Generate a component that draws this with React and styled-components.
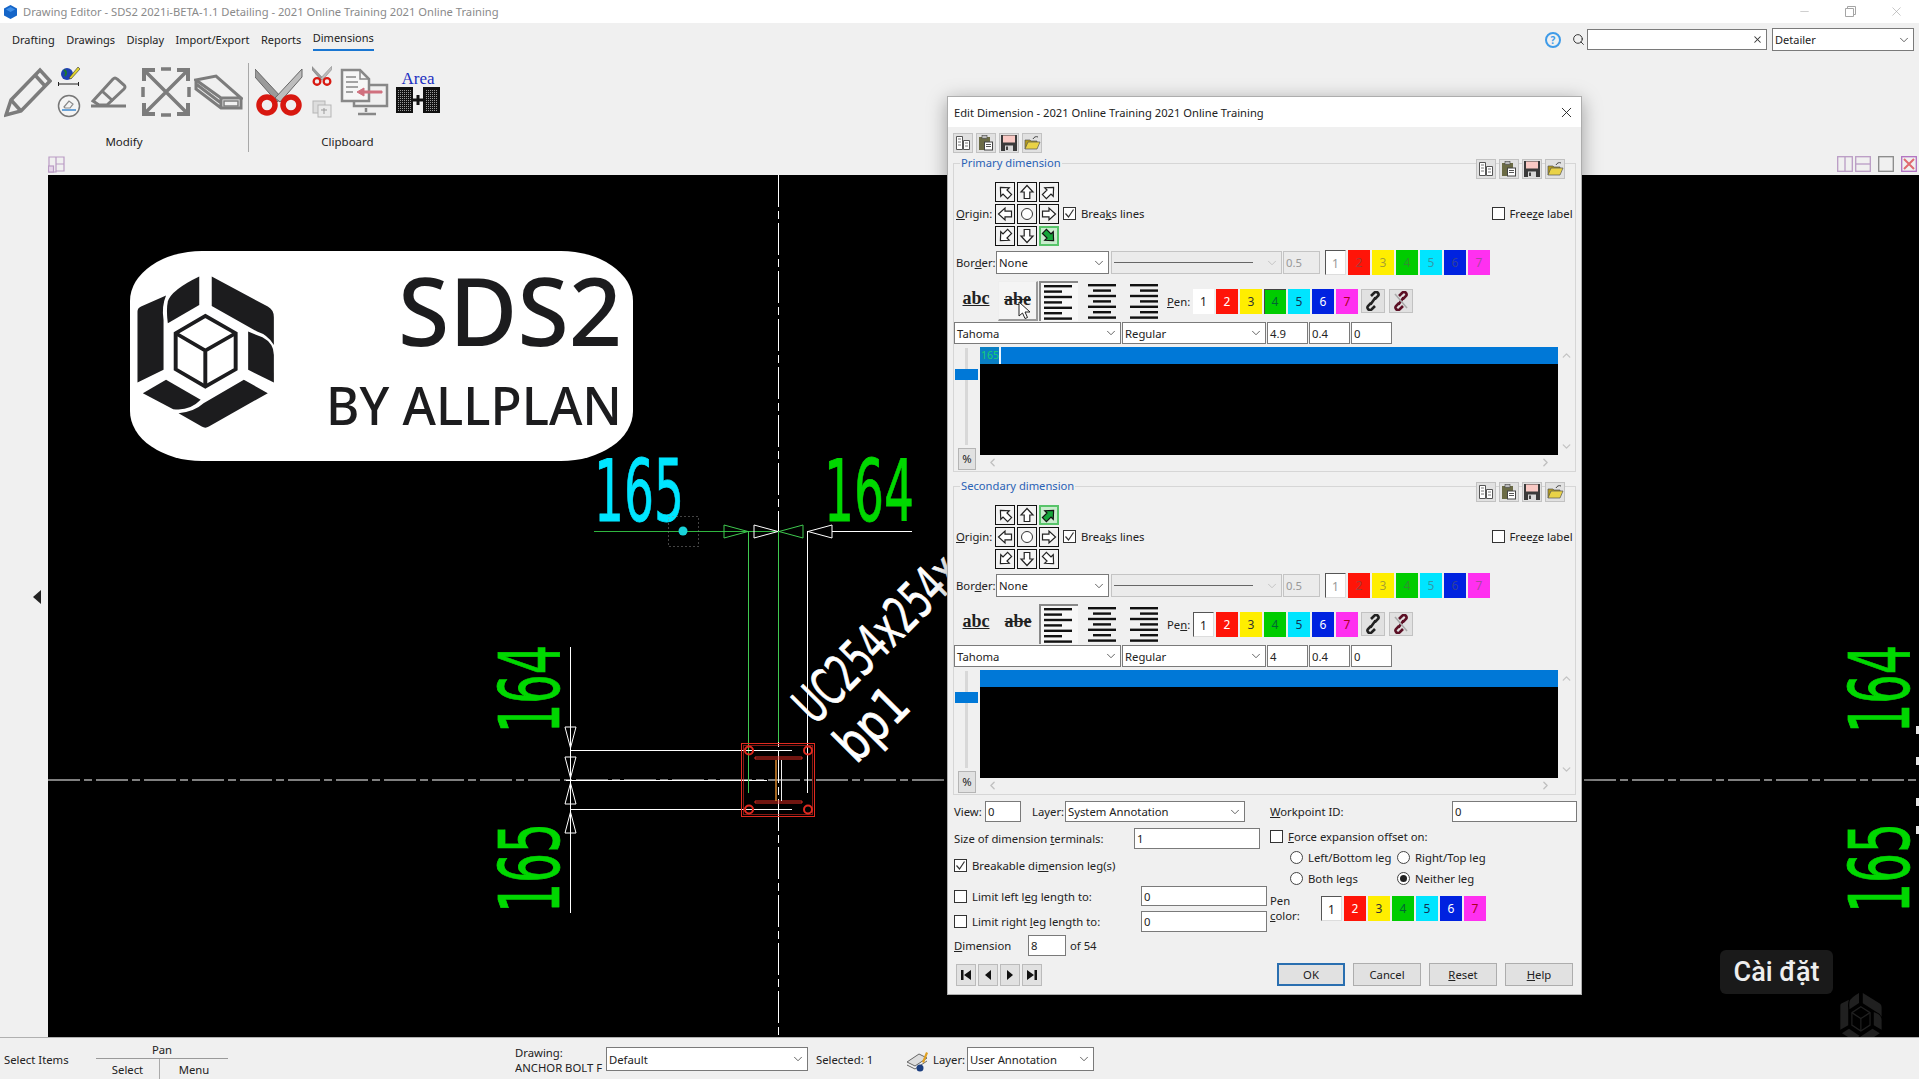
import React from 'react'
import styled, { createGlobalStyle } from 'styled-components'
import { ChevronDown, ChevronUp, ChevronLeft, ChevronRight, X, Minus, Search } from 'lucide-react'

const UI_FONT = '"Noto Sans", "Liberation Sans", sans-serif'
const CAD_FONT = '"DejaVu Sans", "Liberation Sans", sans-serif'

const GREEN = '#00d800'
const CYAN = '#00e5ff'
const WHITE = '#ffffff'
const RED = '#e02a20'
const PEN_COLORS = ['#ffffff', '#ff1408', '#ffee00', '#00cc00', '#00e5ff', '#0022e0', '#ff30f0']
const PEN_TEXT = ['#222', '#fff', '#333', '#063', '#135', '#fff', '#a02']

const GlobalStyle = createGlobalStyle`
  * { box-sizing: border-box; }
  html, body { margin: 0; height: 100%; overflow: hidden; background: #f0f0f0; }
  body { font-family: ${UI_FONT}; font-size: 11.3px; color: #222; }
  u { text-underline-offset: 1px; }
`

const Page = styled.div`
  position: relative;
  width: 1919px;
  height: 1079px;
  display: flex;
  flex-direction: column;
  overflow: hidden;
  background: #f0f0f0;
`

/* window title */
const TitleBar = styled.div`
  height: 23px;
  flex: none;
  display: flex;
  align-items: center;
  padding-left: 4px;
  background: #fff;
  color: #8a8a8a;
  font-size: 11.2px;
`
const TitleText = styled.span`
  margin-left: 6px;
  white-space: nowrap;
`
const WinControls = styled.div`
  margin-left: auto;
  display: flex;
  color: #a5a5a5;
`
const WinControl = styled.div`
  width: 46px;
  height: 23px;
  display: flex;
  align-items: center;
  justify-content: center;
`

/* ribbon */
const Ribbon = styled.div`
  height: 152px;
  flex: none;
  display: flex;
  flex-direction: column;
`
const MenuBar = styled.div`
  height: 30px;
  display: flex;
  align-items: center;
  padding: 3px 5px 0 12px;
  gap: 11.500px;
  font-size: 11px;
`
const MenuItem = styled.div`
  line-height: 20px;
  white-space: nowrap;
  border-bottom: ${p => (p.$active ? '2px solid #1976d2' : 'none')};
  height: ${p => (p.$active ? '23px' : '20px')};
`
const MenuRight = styled.div`
  margin-left: auto;
  display: flex;
  align-items: center;
`
const HelpBadge = styled.div`
  width: 16px;
  height: 16px;
  border-radius: 50%;
  border: 2px solid #3f9be8;
  color: #3f9be8;
  font-size: 10px;
  font-weight: 700;
  line-height: 12px;
  text-align: center;
  margin-right: 11px;
`
const SearchBox = styled.div`
  width: 180px;
  height: 21px;
  margin-left: 2px;
  margin-right: 5px;
  background: #fff;
  border: 1px solid #7a7a7a;
  display: flex;
  align-items: center;
  justify-content: flex-end;
  padding-right: 3px;
  color: #333;
`
const RibbonBody = styled.div`
  height: 100px;
  display: flex;
`
const ToolGroup = styled.div`
  width: ${p => p.$width}px;
  display: flex;
  flex-direction: column;
  padding-top: 13px;
`
const ToolRow = styled.div`
  height: 52px;
  display: flex;
  align-items: center;
  padding-left: ${p => p.$left || 0}px;
`
const ToolStack = styled.div`
  width: 22px;
  height: 52px;
  margin: ${p => p.$margin || '0'};
  display: flex;
  flex-direction: column;
  justify-content: space-between;
  align-items: center;
`
const ToolGap = styled.div`
  width: ${p => p.$width}px;
  flex: none;
`
const GroupLabel = styled.div`
  margin-top: 16px;
  text-align: center;
  font-size: 11.5px;
  line-height: 16px;
`
const RibbonDivider = styled.div`
  width: 1px;
  height: 89px;
  margin: 10px 6px 0 0;
  background: #a8a8a8;
`
const RibbonFooter = styled.div`
  height: 22px;
  display: flex;
  justify-content: space-between;
  align-items: center;
  padding: 0 2px 0 48px;
`
const ViewIcons = styled.div`
  display: flex;
  gap: 2px;
`

/* main */
const Main = styled.div`
  flex: none;
  height: 862px;
  display: flex;
`
const LeftStrip = styled.div`
  width: 48px;
  flex: none;
  display: flex;
  align-items: center;
  justify-content: flex-end;
  padding: 0 7px 18px 0;
  background: #f0f0f0;
`
const CollapseArrow = styled.div`
  width: 0;
  height: 0;
  border-style: solid;
  border-width: 7px 8px 7px 0;
  border-color: transparent #222 transparent transparent;
`
const Canvas = styled.div`
  position: relative;
  flex: 1;
  background: #000;
  overflow: hidden;
`
const Drawing = styled.svg`
  position: absolute;
  inset: 0;
  width: 100%;
  height: 100%;
`
const CadText = styled.text`
  font-family: ${CAD_FONT};
  stroke-width: 0.8px;
`
const LogoText = styled.text`
  font-family: "Noto Sans", sans-serif;
  font-weight: 500;
  fill: #1c1c1e;
`
const Toast = styled.div`
  position: absolute;
  left: 1672px;
  top: 775px;
  width: 113px;
  height: 44px;
  background: #1a1a1a;
  border-radius: 6px;
  color: #eee;
  font-family: Roboto, sans-serif;
  font-weight: 500;
  font-size: 27px;
  line-height: 44px;
  text-align: center;
`

/* status bar */
const StatusBar = styled.div`
  flex: none;
  height: 42px;
  display: flex;
  border-top: 1px solid #b0b0b0;
  font-size: 11.3px;
  white-space: nowrap;
`
const StatusItem = styled.div`
  width: ${p => p.$width}px;
  flex: none;
  height: 100%;
  display: flex;
  align-items: center;
  padding-top: 2px;
  padding-left: ${p => p.$left || 0}px;
`
const PanBlock = styled.div`
  width: 132px;
  flex: none;
  display: flex;
  flex-direction: column;
  margin-right: 287px;
`
const PanLabel = styled.div`
  height: 21px;
  line-height: 24px;
  text-align: center;
  border-bottom: 1px solid #9a9a9a;
`
const PanRow = styled.div`
  display: flex;
  height: 20px;
  align-items: center;
`
const PanCell = styled.div`
  width: ${p => p.$width}px;
  height: 100%;
  line-height: 22px;
  text-align: center;
  border-right: ${p => (p.$line ? '1px solid #aaa' : 'none')};
`
const DrawingCell = styled.div`
  width: 91px;
  flex: none;
  padding-top: 7px;
  line-height: 15px;
  overflow: hidden;
`
const StatusField = styled.div`
  margin-top: 9px;
`

/* dialog */
const Dialog = styled.div`
  position: absolute;
  left: 947px;
  top: 96px;
  width: 635px;
  height: 899px;
  background: #f0f0f0;
  border: 1px solid #adadad;
  box-shadow: 0 4px 18px rgba(0, 0, 0, 0.35);
  padding: 0 5px;
`
const DialogTitle = styled.div`
  height: 30px;
  margin: 0 -5px;
  padding: 0 6px 0 6px;
  background: #fff;
  display: flex;
  align-items: center;
  justify-content: space-between;
  font-size: 11.2px;
`
const SaveBar = styled.div`
  display: flex;
  gap: 3px;
  height: 20px;
  margin-top: ${p => p.$top || 0}px;
`
const IconButton = styled.div`
  width: 20px;
  height: 20px;
  background: #e1e1e1;
  border: 1px solid #c2c2c2;
  display: flex;
  align-items: center;
  justify-content: center;
`
const Group = styled.div`
  position: relative;
  height: 309px;
  margin-top: ${p => p.$top}px;
  border: 1px solid #d6d6d6;
  padding-top: 18px;
`
const Legend = styled.div`
  position: absolute;
  left: 6px;
  top: -9px;
  padding: 0 1px;
  background: #f0f0f0;
  color: #2a62b5;
  font-size: 11.2px;
  line-height: 16px;
`
const GroupTools = styled.div`
  position: absolute;
  right: 10px;
  top: -5px;
`
const OriginRow = styled.div`
  height: 64px;
  padding-bottom: 2px;
  display: flex;
  align-items: center;
`
const RowLabel = styled.div`
  width: ${p => p.$width}px;
  margin-left: ${p => p.$left || 0}px;
  flex: none;
  white-space: nowrap;
`
const OriginGrid = styled.div`
  display: grid;
  grid-template-columns: repeat(3, 20px);
  grid-auto-rows: 20px;
  gap: 2px;
  margin-bottom: -2px;
`
const OriginCell = styled.div`
  border: 1px solid ${p => (p.$on ? '#58c46a' : '#111')};
  background: ${p => (p.$on ? '#c9eccd' : '#f2f2f2')};
  box-shadow: ${p => (p.$on ? 'inset 0 0 0 1px #58c46a' : 'none')};
  display: flex;
  align-items: center;
  justify-content: center;
`
const CheckLabel = styled.label`
  display: flex;
  align-items: center;
  gap: 5px;
  white-space: nowrap;
  margin-left: ${p => p.$left || 0}px;
  height: ${p => p.$height || 14}px;
`
const Box = styled.span`
  width: 13px;
  height: 13px;
  flex: none;
  background: #fff;
  border: 1px solid #333;
  display: flex;
  align-items: center;
  justify-content: center;
`
const Radio = styled.span`
  width: 13px;
  height: 13px;
  flex: none;
  border-radius: 50%;
  background: #fff;
  border: 1px solid #444;
  display: flex;
  align-items: center;
  justify-content: center;
  &::after {
    content: '';
    width: 7px;
    height: 7px;
    border-radius: 50%;
    background: ${p => (p.$on ? '#222' : 'transparent')};
  }
`
const FormRow = styled.div`
  display: flex;
  align-items: center;
  height: ${p => p.$height || 23}px;
  margin-top: ${p => p.$top || 0}px;
  margin-left: ${p => p.$left || 0}px;
`
const Field = styled.div`
  width: ${p => p.$width}px;
  height: ${p => p.$height || 21}px;
  flex: none;
  margin-left: ${p => p.$left || 0}px;
  padding: 0 2px 0 2px;
  background: ${p => (p.$off ? '#ebebeb' : '#fff')};
  border: 1px solid ${p => (p.$off ? '#c4c4c4' : '#7a7a7a')};
  color: ${p => (p.$off ? '#999' : '#222')};
  display: flex;
  align-items: center;
  justify-content: space-between;
  white-space: nowrap;
  overflow: hidden;
`
const LineSample = styled.div`
  flex: 1;
  height: 1px;
  margin-right: 12px;
  background: #666;
`
const Swatches = styled.div`
  display: flex;
  gap: 2px;
  margin-left: ${p => p.$left || 0}px;
  margin-top: ${p => p.$top || 0}px;
`
const Swatch = styled.div`
  width: ${p => (p.$first ? 21 : 22)}px;
  height: 25px;
  background: ${p => p.$bg};
  color: ${p => p.$fg};
  text-align: center;
  line-height: 25px;
  font-size: 12px;
  border-top: ${p => (p.$frame ? '1px solid #555' : 'none')};
  border-left: ${p => (p.$frame ? '1px solid #555' : 'none')};
  border-bottom: ${p => (p.$frame ? '1px solid #ddd' : 'none')};
  border-right: ${p => (p.$frame ? '1px solid #ddd' : 'none')};
  box-shadow: ${p => (p.$pressed ? 'inset 1px 1px 0 #444' : 'none')};
`
const TextRow = styled.div`
  height: 42px;
  margin-top: 6px;
  display: flex;
  align-items: center;
`
const AbcGlyph = styled.div`
  position: relative;
  width: ${p => p.$width || 40}px;
  height: 40px;
  margin-left: ${p => p.$left || 0}px;
  flex: none;
  font-family: "Liberation Serif", serif;
  font-weight: 700;
  font-size: 18px;
  line-height: 34px;
  text-align: center;
  color: #222;
  text-decoration: ${p => p.$line};
  background: ${p => (p.$raised ? '#f4f4f4' : 'transparent')};
  border-right: ${p => (p.$raised ? '2px solid #999' : 'none')};
  border-bottom: ${p => (p.$raised ? '2px solid #999' : 'none')};
  border-top: ${p => (p.$raised ? '1px solid #eee' : 'none')};
  border-left: ${p => (p.$raised ? '1px solid #eee' : 'none')};
`
const PointerMark = styled.svg`
  position: absolute;
  left: 19px;
  top: 19px;
`
const AlignButton = styled.div`
  width: ${p => p.$width}px;
  height: 40px;
  flex: none;
  margin-left: ${p => p.$left || 0}px;
  padding-right: ${p => (p.$on ? 3 : 0)}px;
  display: flex;
  align-items: center;
  justify-content: center;
  background: ${p => (p.$on ? '#f7f7f7' : 'transparent')};
  border-top: ${p => (p.$on ? '2px solid #888' : 'none')};
  border-left: ${p => (p.$on ? '2px solid #888' : 'none')};
`
const LinkButton = styled.div`
  width: 24px;
  height: 24px;
  margin-left: ${p => p.$left}px;
  flex: none;
  background: #e1e1e1;
  border: 1px solid #c2c2c2;
  display: flex;
  align-items: center;
  justify-content: center;
`
const PreviewRow = styled.div`
  display: flex;
  margin-top: 3px;
  height: 123px;
`
const SliderCol = styled.div`
  position: relative;
  width: 26px;
  flex: none;
`
const SliderTrack = styled.div`
  position: absolute;
  left: 11px;
  top: 1px;
  width: 3px;
  height: 97px;
  background: #d8d8d8;
`
const SliderThumb = styled.div`
  position: absolute;
  left: 1px;
  top: 22px;
  width: 23px;
  height: 11px;
  background: #0078d7;
`
const PercentButton = styled.div`
  position: absolute;
  left: 4px;
  bottom: 0;
  width: 18px;
  height: 22px;
  background: #e1e1e1;
  border: 1px solid #b5b5b5;
  text-align: center;
  line-height: 20px;
`
const PreviewPane = styled.div`
  width: 578px;
  flex: none;
  display: flex;
  flex-direction: column;
`
const PreviewBlack = styled.div`
  height: 108px;
  background: #000;
`
const PreviewLine = styled.div`
  height: 17px;
  background: #0078d7;
  display: flex;
`
const PreviewValue = styled.span`
  width: 21px;
  background: #0a7fc4;
  border-right: 2px solid #e8f4ff;
  color: #18d070;
  font-size: 10.5px;
  line-height: 17px;
  padding-left: 1px;
`
const HScroll = styled.div`
  height: 15px;
  display: flex;
  justify-content: space-between;
  align-items: center;
  padding: 0 6px 0 6px;
  color: #c0c0c0;
`
const VScroll = styled.div`
  width: 18px;
  height: 108px;
  display: flex;
  flex-direction: column;
  justify-content: space-between;
  align-items: center;
  padding: 2px 0;
  color: #c4c4c4;
`

const BottomGrid = styled.div`
  display: grid;
  grid-template-columns: 316px 1fr;
  margin-top: 6px;
  padding-left: 1px;
`
const BottomCol = styled.div`
  display: flex;
  flex-direction: column;
`
const RadioGrid = styled.div`
  display: grid;
  grid-template-columns: 107px 1fr;
  grid-auto-rows: 14px;
  row-gap: 7px;
  margin: 7px 0 0 20px;
`
const PenBlock = styled.div`
  display: flex;
  margin-top: 8px;
  align-items: center;
`
const PenCaption = styled.div`
  width: 51px;
  line-height: 15px;
`
const ButtonRow = styled.div`
  display: flex;
  align-items: center;
  margin-top: 7px;
  padding-left: 3px;
`
const NavGroup = styled.div`
  display: flex;
  gap: 2px;
  margin-right: 235px;
`
const NavButton = styled.div`
  width: 20px;
  height: 22px;
  background: #e1e1e1;
  border: 1px solid #bbb;
  display: flex;
  align-items: center;
  justify-content: center;
`
const ActionGroup = styled.div`
  display: flex;
  gap: 8px;
`
const ActionButton = styled.div`
  width: 68px;
  height: 23px;
  background: #e1e1e1;
  border: ${p => (p.$primary ? '2px solid #2a6fb0' : '1px solid #adadad')};
  text-align: center;
  line-height: ${p => (p.$primary ? 19 : 21)}px;
`

function CopyIcon() {
  return (
    <svg width="16" height="16" viewBox="0 0 16 16" fill="#fff" stroke="#555">
      <path d="M1.5 1.5h6v13h-6zM8.5 5.5h6v9h-6z" />
      <path d="M3 4h3M3 7h3M3 10h3M10 8h3M10 11h3" strokeWidth="0.8" />
    </svg>
  )
}
function PasteIcon() {
  return (
    <svg width="16" height="16" viewBox="0 0 16 16">
      <rect x="1" y="2" width="11" height="13" fill="#6b6b45" />
      <rect x="4" y="0.5" width="5" height="3" fill="#bcbcbc" stroke="#444" strokeWidth="0.6" />
      <rect x="6.5" y="7" width="8" height="8" fill="#fff" stroke="#444" />
      <path d="M8 9.5h5M8 11.5h5" stroke="#555" />
    </svg>
  )
}
function SaveIcon() {
  return (
    <svg width="18" height="18" viewBox="0 0 18 18">
      <rect x="1" y="1" width="16" height="16" fill="#3a3a3a" />
      <rect x="3" y="1.5" width="12" height="7" fill="#f9c9c4" />
      <rect x="5" y="11.5" width="8" height="5.5" fill="#d8d8d8" />
      <rect x="6" y="12.5" width="2" height="3.5" fill="#444" />
    </svg>
  )
}
function OpenIcon() {
  return (
    <svg width="17" height="16" viewBox="0 0 17 16">
      <path d="M1 14V5h5l1 1h6v2" fill="#b49b1a" stroke="#555" strokeWidth="0.7" />
      <path d="M1 14l3-7h12l-3 7z" fill="#e9d247" stroke="#555" strokeWidth="0.7" />
      <path d="M9 4c1-2 3-3 5-2" fill="none" stroke="#444" />
    </svg>
  )
}
function SaveTools() {
  return (
    <>
      <IconButton><CopyIcon /></IconButton>
      <IconButton><PasteIcon /></IconButton>
      <IconButton><SaveIcon /></IconButton>
      <IconButton><OpenIcon /></IconButton>
    </>
  )
}

function DirArrow({ angle, on }) {
  return (
    <svg width="16" height="16" viewBox="0 0 16 16" style={{ transform: `rotate(${angle}deg)` }}>
      <path
        d="M8 1.5 14 8h-3.2v6.5H5.200V8H2z"
        fill={on ? '#16a63a' : '#fff'}
        stroke={on ? '#111' : '#222'}
        strokeWidth="1.2"
      />
    </svg>
  )
}
function OriginPad({ selected }) {
  const angles = [-45, 0, 45, -90, null, 90, -135, 180, 135]
  return (
    <OriginGrid>
      {angles.map((a, i) => (
        <OriginCell key={i} $on={i === selected}>
          {a === null ? (
            <svg width="14" height="14" viewBox="0 0 14 14">
              <circle cx="7" cy="7" r="5.500" fill="#fff" stroke="#333" />
            </svg>
          ) : (
            <DirArrow angle={a} on={i === selected} />
          )}
        </OriginCell>
      ))}
    </OriginGrid>
  )
}

function Check({ on, children, left }) {
  return (
    <CheckLabel $left={left}>
      <Box>
        {on && (
          <svg width="11" height="11" viewBox="0 0 11 11">
            <path d="M1.500 5.500 4.500 9 9.500 1.500" fill="none" stroke="#333" strokeWidth="1.2" />
          </svg>
        )}
      </Box>
      <span>{children}</span>
    </CheckLabel>
  )
}
function RadioItem({ on, children }) {
  return (
    <CheckLabel>
      <Radio $on={on} />
      <span>{children}</span>
    </CheckLabel>
  )
}
function Select({ width, height, left, off, children }) {
  return (
    <Field $width={width} $height={height} $left={left} $off={off}>
      {children}
      <ChevronDown size={14} strokeWidth={1.4} color={off ? '#bbb' : '#444'} style={{ flex: 'none' }} />
    </Field>
  )
}
function PenSwatches({ dim, frameFirst, pressed, left, top }) {
  return (
    <Swatches $left={left} $top={top}>
      {PEN_COLORS.map((c, i) => (
        <Swatch
          key={c}
          $first={i === 0}
          $bg={c}
          $fg={dim ? (i === 0 ? '#999' : 'rgba(90,90,90,0.55)') : PEN_TEXT[i]}
          $frame={i === 0 && frameFirst}
          $pressed={i + 1 === pressed}
        >
          {i + 1}
        </Swatch>
      ))}
    </Swatches>
  )
}
function AlignLines({ mode }) {
  const rows = [28, 18, 28, 18, 28, 18, 28]
  return (
    <svg width="28" height="36" viewBox="0 0 28 36">
      {rows.map((w, i) => {
        const x = mode === 'left' ? 0 : mode === 'center' ? (28 - w) / 2 : 28 - w
        return <rect key={i} x={x} y={1 + i * 5.400} width={w} height="2.400" fill="#111" />
      })}
    </svg>
  )
}
function ChainIcon({ broken }) {
  return (
    <svg width="18" height="20" viewBox="0 0 18 20" fill="none">
      <path
        d="M7 12 4 15a2.500 2.500 0 0 0 3.500 3.500L11 15M11 8l3-3a2.500 2.500 0 0 0-3.500-3.500L7 5M6.500 13.500l5-7"
        stroke={broken ? '#5c1025' : '#222'}
        strokeWidth="2.600"
      />
      {broken && <path d="M3 3 15 17" stroke="#aaa" strokeWidth="1.600" />}
    </svg>
  )
}

function DimensionGroup({ top, title, selected, height, value, penPressed, pointer, penFramed }) {
  return (
    <Group $top={top}>
      <Legend>{title}</Legend>
      <GroupTools><SaveBar><SaveTools /></SaveBar></GroupTools>
      <OriginRow>
        <RowLabel $left={2} $width={39}><u>O</u>rigin:</RowLabel>
        <OriginPad selected={selected} />
        <Check on left={4}>Brea<u>k</u>s lines</Check>
        <Check left={347}>Free<u>z</u>e label</Check>
      </OriginRow>
      <FormRow $top={5}>
        <RowLabel $left={2} $width={40}>Bor<u>d</u>er:</RowLabel>
        <Select width={113} height={23}>None</Select>
        <Select width={171} height={23} left={2} off><LineSample /></Select>
        <Field $width={37} $height={23} $left={1} $off>0.5</Field>
        <PenSwatches dim frameFirst left={5} top={-1} />
      </FormRow>
      <TextRow>
        <AbcGlyph $width={44} $line="underline">abc</AbcGlyph>
        <AbcGlyph $width={40} $raised={pointer} $line="line-through">
          abe
          {pointer && (
            <PointerMark width="13" height="18" viewBox="0 0 13 18">
              <path d="M1 1v14l3.500-3 2.500 5.500 2.500-1-2.500-5.500H12z" fill="#fff" stroke="#222" />
            </PointerMark>
          )}
        </AbcGlyph>
        <AlignButton $width={39} $left={1} $on><AlignLines mode="left" /></AlignButton>
        <AlignButton $width={28} $left={10}><AlignLines mode="center" /></AlignButton>
        <AlignButton $width={28} $left={14}><AlignLines mode="right" /></AlignButton>
        <RowLabel $left={9} $width={26}>
          {pointer ? <><u>P</u>en:</> : <>Pe<u>n</u>:</>}
        </RowLabel>
        <PenSwatches frameFirst={penFramed} pressed={penPressed} />
        <LinkButton $left={3}><ChainIcon /></LinkButton>
        <LinkButton $left={4}><ChainIcon broken /></LinkButton>
      </TextRow>
      <FormRow $height={22}>
        <Select width={167} height={22}>Tahoma</Select>
        <Select width={144} height={22} left={1}>Regular</Select>
        <Field $width={41} $height={22} $left={1}>{height}</Field>
        <Field $width={41} $height={22} $left={1}>0.4</Field>
        <Field $width={41} $height={22} $left={1}>0</Field>
      </FormRow>
      <PreviewRow>
        <SliderCol>
          <SliderTrack />
          <SliderThumb />
          <PercentButton>%</PercentButton>
        </SliderCol>
        <PreviewPane>
          <PreviewBlack>
            <PreviewLine>{value && <PreviewValue>{value}</PreviewValue>}</PreviewLine>
          </PreviewBlack>
          <HScroll>
            <ChevronLeft size={13} strokeWidth={2.500} />
            <ChevronRight size={13} strokeWidth={2.500} />
          </HScroll>
        </PreviewPane>
        <VScroll>
          <ChevronUp size={13} strokeWidth={2.500} />
          <ChevronDown size={13} strokeWidth={2.500} />
        </VScroll>
      </PreviewRow>
    </Group>
  )
}

function BottomForm() {
  return (
    <BottomGrid>
      <BottomCol>
        <FormRow $height={21}>
          <RowLabel $width={31}>View:</RowLabel>
          <Field $width={36}>0</Field>
          <RowLabel $left={11} $width={33}>Layer:</RowLabel>
          <Select width={180}>System Annotation</Select>
        </FormRow>
        <FormRow $height={21} $top={6}>
          <RowLabel $width={180}>Size of dimension <u>t</u>erminals:</RowLabel>
          <Field $width={126}>1</Field>
        </FormRow>
        <FormRow $height={14} $top={9}>
          <Check on>Breakable di<u>m</u>ension leg(s)</Check>
        </FormRow>
        <FormRow $height={20} $top={14}>
          <RowLabel $width={187}><Check>Limit left l<u>e</u>g length to:</Check></RowLabel>
          <Field $width={126} $height={20}>0</Field>
        </FormRow>
        <FormRow $height={21} $top={5}>
          <RowLabel $width={187}><Check>Limit right <u>l</u>eg length to:</Check></RowLabel>
          <Field $width={126}>0</Field>
        </FormRow>
        <FormRow $height={21} $top={3}>
          <RowLabel $width={74}><u>D</u>imension</RowLabel>
          <Field $width={38}>8</Field>
          <RowLabel $left={4} $width={40}>of 54</RowLabel>
        </FormRow>
      </BottomCol>
      <BottomCol>
        <FormRow $height={21}>
          <RowLabel $width={182}><u>W</u>orkpoint ID:</RowLabel>
          <Field $width={125}>0</Field>
        </FormRow>
        <FormRow $height={13} $top={8}>
          <Check><u>F</u>orce expansion offset on:</Check>
        </FormRow>
        <RadioGrid>
          <RadioItem>Left/Bottom leg</RadioItem>
          <RadioItem>Right/Top leg</RadioItem>
          <RadioItem>Both legs</RadioItem>
          <RadioItem on>Neither leg</RadioItem>
        </RadioGrid>
        <PenBlock>
          <PenCaption>Pen<br /><u>c</u>olor:</PenCaption>
          <PenSwatches frameFirst />
        </PenBlock>
      </BottomCol>
    </BottomGrid>
  )
}

function NavIcon({ kind }) {
  const paths = {
    first: 'M2 2h2.500v10H2zM12 2v10L5 7z',
    prev: 'M10 2v10L4 7z',
    next: 'M4 2v10l6-5z',
    last: 'M12 2H9.500v10H12zM2 2v10l7-5z',
  }
  return (
    <svg width="14" height="14" viewBox="0 0 14 14">
      <path d={paths[kind]} fill="#111" />
    </svg>
  )
}

function EditDialog() {
  return (
    <Dialog>
      <DialogTitle>
        <span>Edit Dimension - 2021 Online Training 2021 Online Training</span>
        <X size={17} strokeWidth={1.300} color="#222" />
      </DialogTitle>
      <SaveBar $top={6}><SaveTools /></SaveBar>
      <DimensionGroup
        top={10}
        title="Primary dimension"
        selected={8}
        height="4.9"
        value="165"
        penPressed={4}
        pointer
      />
      <DimensionGroup
        top={14}
        title="Secondary dimension"
        selected={2}
        height="4"
        penFramed
      />
      <BottomForm />
      <ButtonRow>
        <NavGroup>
          {['first', 'prev', 'next', 'last'].map(k => (
            <NavButton key={k}><NavIcon kind={k} /></NavButton>
          ))}
        </NavGroup>
        <ActionGroup>
          <ActionButton $primary>OK</ActionButton>
          <ActionButton>Cancel</ActionButton>
          <ActionButton><u>R</u>eset</ActionButton>
          <ActionButton><u>H</u>elp</ActionButton>
        </ActionGroup>
      </ButtonRow>
    </Dialog>
  )
}

/* ribbon drawings */
function PencilTool() {
  return (
    <svg width="48" height="52" viewBox="0 0 48 52" fill="none" stroke="#7c7c7c" strokeWidth="3.500">
      <path d="M2 49 7 34 36 4 46 15 17 45z" />
      <path d="M7 34 17 45M31 9 41 20" />
    </svg>
  )
}
function EarthTool() {
  return (
    <svg width="22" height="24" viewBox="0 0 22 24">
      <circle cx="9" cy="8" r="6" fill="#1d3fb0" />
      <path d="M6 4c2 1 3 3 1 6" stroke="#1a7a2e" strokeWidth="2" fill="none" />
      <path d="M11 12 20 1l2 2-9 10z" fill="#e3d52b" stroke="#333" strokeWidth="0.6" />
      <path d="M0 18h21M0.500 16v4M20.500 16v4" stroke="#222" strokeWidth="1" />
    </svg>
  )
}
function EraserBadgeTool() {
  return (
    <svg width="24" height="24" viewBox="0 0 24 24" fill="none">
      <circle cx="12" cy="12" r="10.500" stroke="#777" strokeWidth="1.500" fill="#f4f4f4" />
      <path d="M7 13l5-6 4 3-3 4H8z" stroke="#888" strokeWidth="1.200" />
      <path d="M5 16h14" stroke="#6aa3d8" strokeWidth="2" />
    </svg>
  )
}
function EraserTool() {
  return (
    <svg width="36" height="32" viewBox="0 0 36 32" fill="none" stroke="#7c7c7c" strokeWidth="3">
      <path d="M2 25 22 3q2-2 4 0l7 6q2 2 0 4L16 29H8z" />
      <path d="M11 15 22 25" />
      <path d="M0 30h35" />
    </svg>
  )
}
function ExpandTool() {
  return (
    <svg width="50" height="50" viewBox="0 0 50 50" fill="none" stroke="#7c7c7c" strokeWidth="3.500">
      <path d="M3 3 47 47M47 3 3 47" />
      <path d="M3 14V3h11M36 3h11v11M3 36v11h11M36 47h11V36" strokeWidth="4" />
      <path d="M20 2h10M20 48h10M2 20v10M48 20v10" strokeWidth="3.500" />
    </svg>
  )
}
function BoxTool() {
  return (
    <svg width="49" height="37" viewBox="0 0 49 37" fill="none" stroke="#7c7c7c" strokeWidth="3">
      <path d="M2 6 22 2 47 24H27z" />
      <path d="M2 6v9l25 19h20V24M27 24v10M2 10l25 19" />
      <rect x="30" y="27" width="14" height="5" fill="#f0f0f0" strokeWidth="1.500" />
    </svg>
  )
}
function Scissors({ size }) {
  return (
    <svg width={size} height={size} viewBox="0 0 48 48">
      <path d="M0 1 27 30 22 34 0 9z" fill="#9a9a9a" stroke="#666" />
      <path d="M47 1 20 30 25 34 47 9z" fill="#bdbdbd" stroke="#666" />
      <circle cx="12" cy="37" r="8" fill="none" stroke="#d81810" strokeWidth="5.500" />
      <circle cx="36" cy="37" r="8" fill="none" stroke="#d81810" strokeWidth="5.500" />
    </svg>
  )
}
function PagesTool() {
  return (
    <svg width="20" height="18" viewBox="0 0 20 18" fill="#ddd" stroke="#b5b5b5">
      <rect x="1" y="1" width="12" height="12" />
      <rect x="6" y="5" width="13" height="12" fill="#eaeaea" />
      <path d="M12 8v6M9 10h6" stroke="#999" />
    </svg>
  )
}
function MonitorTool() {
  return (
    <svg width="49" height="48" viewBox="0 0 49 48" fill="none" stroke="#888" strokeWidth="2.500">
      <path d="M2 2h18l9 9v22H2z" fill="#f6f6f6" />
      <path d="M20 2v9h9M6 9h10M6 14h12M6 19h12M6 24h7" strokeWidth="1.500" />
      <path d="M29 17h18v21H14v-5" />
      <path d="M26 40v4M18 46h18" />
      <path d="M17 24l7-4v3h18v2H24v3z" fill="#d0707e" stroke="#d0707e" strokeWidth="1" />
    </svg>
  )
}
function AreaTool() {
  return (
    <svg width="44" height="44" viewBox="0 0 44 44">
      <defs>
        <pattern id="dots" width="2" height="2" patternUnits="userSpaceOnUse">
          <rect width="2" height="2" fill="#111" />
          <rect width="1" height="1" fill="#999" />
        </pattern>
      </defs>
      <text x="22" y="14" textAnchor="middle" fontFamily='"Liberation Serif", serif' fontWeight="400" fontSize="17" fill="#1a2ec0">Area</text>
      <rect x="1" y="18" width="15" height="24" fill="url(#dots)" stroke="#111" strokeWidth="2" />
      <rect x="28" y="18" width="15" height="24" fill="url(#dots)" stroke="#111" strokeWidth="2" />
      <path d="M16 30h12M22 25v10" stroke="#111" strokeWidth="3" />
    </svg>
  )
}
function ViewIcon({ kind }) {
  const stroke = kind === 'close' ? '#b06fc0' : '#b99bc4'
  return (
    <svg width="16" height="16" viewBox="0 0 16 16" fill="none" stroke={stroke} strokeWidth="1.300">
      <rect x="0.700" y="0.700" width="14.600" height="14.600" stroke={kind === 'plain' ? '#888' : stroke} />
      {kind === 'vsplit' && <path d="M8 1v14" />}
      {kind === 'hsplit' && <path d="M1 8h14" />}
      {kind === 'close' && <path d="M3 3 13 13M13 3 3 13" stroke="#e06a70" strokeWidth="2" />}
    </svg>
  )
}

/* canvas drawing, in page coordinates */
function LogoMark({ transform, fill, cubeStroke }) {
  return (
    <g transform={transform} fill={fill}>
      <path d="M313 140 470 230Q487 240 487 262V345Q470 315 440 305L313 228Z" />
      <path d="M415 305 455 322Q487 340 487 375V458L415 420Z" />
      <path d="M278 140V225L190 280Q185 240 190 215Q200 180 278 140Z" />
      <path d="M185 197Q172 230 178 270V420L105 458V245Q105 235 115 230Z" />
      <path d="M185 450 282 510Q250 545 205 538L120 490Z" />
      <path d="M403 450 470 490 305 590Q295 597 285 590L220 550Q265 545 290 520Z" />
      <g fill="none" stroke={cubeStroke} strokeWidth="11">
        <path d="M295 258 380 310V418L295 470 212 418V310Z" />
        <path d="M212 310 295 362 380 310M295 362V470" />
      </g>
    </g>
  )
}
function Arrowhead({ points, color }) {
  return <polygon points={points} fill="none" stroke={color} strokeWidth="1" />
}
function DimText({ x, y, size, length, fill, rotate, children }) {
  const transform = rotate ? `translate(${x} ${y}) rotate(-90)` : `translate(${x} ${y})`
  return (
    <CadText transform={transform} fontSize={size} textLength={length} lengthAdjust="spacingAndGlyphs" fill={fill} stroke={fill}>
      {children}
    </CadText>
  )
}
function CadDrawing() {
  return (
    <Drawing viewBox="48 175 1871 862" preserveAspectRatio="none">
      <line x1="48" y1="780" x2="1919" y2="780" stroke={WHITE} strokeDasharray="32 4 8 4" />
      <line x1="778.500" y1="175" x2="778.500" y2="1037" stroke={WHITE} strokeDasharray="32 4 8 4" />
      <line x1="566" y1="780.500" x2="767" y2="780.500" stroke={WHITE} />

      <rect x="130" y="251" width="503" height="210" rx="72" ry="50" fill="#fff" />
      <LogoMark transform="translate(100 230) scale(0.357 0.333)" fill="#1c1c1e" cubeStroke="#1c1c1e" />
      <LogoText x="398" y="346" fontSize="94" textLength="224" lengthAdjust="spacingAndGlyphs">SDS2</LogoText>
      <LogoText x="326" y="425" fontSize="52" textLength="296" lengthAdjust="spacingAndGlyphs">BY ALLPLAN</LogoText>

      <DimText x={594} y={521} size={85} length={90} fill={CYAN}>165</DimText>
      <DimText x={824} y={521} size={85} length={90} fill={GREEN}>164</DimText>

      <line x1="594" y1="531.500" x2="724" y2="531.500" stroke="#2fb53f" />
      <line x1="832" y1="531.500" x2="912" y2="531.500" stroke={WHITE} />
      <line x1="724" y1="531.500" x2="779" y2="531.500" stroke="#2fb53f" />
      <Arrowhead points="724,525 748,531.500 724,538" color="#3fc94f" />
      <Arrowhead points="754,525 778,531.500 754,538" color={WHITE} />
      <Arrowhead points="803,525 779,531.500 803,538" color="#3fc94f" />
      <Arrowhead points="832,525 808,531.500 832,538" color={WHITE} />
      <line x1="748.500" y1="531" x2="748.500" y2="793" stroke="#3fc94f" />
      <line x1="778.500" y1="531" x2="778.500" y2="742" stroke="#3fc94f" />
      <line x1="807.500" y1="531" x2="807.500" y2="793" stroke={WHITE} />
      <circle cx="683" cy="531" r="4.500" fill="#19d3da" />
      <rect x="668.500" y="516.500" width="30" height="30" fill="none" stroke="#888" strokeDasharray="1 3" />

      <line x1="570.500" y1="647" x2="570.500" y2="913" stroke={WHITE} />
      <Arrowhead points="565,727 576,727 570.500,748" color={WHITE} />
      <Arrowhead points="565,757 576,757 570.500,778" color={WHITE} />
      <Arrowhead points="565,804 576,804 570.500,783" color={WHITE} />
      <Arrowhead points="565,833 576,833 570.500,812" color={WHITE} />
      <line x1="570" y1="750.500" x2="792" y2="750.500" stroke={WHITE} />
      <line x1="570" y1="809.500" x2="792" y2="809.500" stroke={WHITE} />
      <DimText x={559} y={733} size={84} length={88} fill={GREEN} rotate>164</DimText>
      <DimText x={559} y={913} size={84} length={90} fill={GREEN} rotate>165</DimText>
      <DimText x={1909} y={733} size={84} length={88} fill={GREEN} rotate>164</DimText>
      <DimText x={1909} y={913} size={84} length={90} fill={GREEN} rotate>165</DimText>

      <g fill="none" stroke={RED}>
        <rect x="741.500" y="743.500" width="73" height="73" />
        <rect x="743.500" y="745.500" width="69" height="69" strokeOpacity="0.6" />
        <circle cx="749" cy="750.500" r="4" strokeWidth="2" />
        <circle cx="808" cy="750.500" r="4" strokeWidth="2" />
        <circle cx="749" cy="809.500" r="4" strokeWidth="2" />
        <circle cx="808" cy="809.500" r="4" strokeWidth="2" />
        <path d="M755 757h47v2h-47zM755 801h47v2h-47z" />
      </g>
      <path d="M776 760v41" stroke="#d6862a" strokeWidth="1.500" />
      <path d="M781.500 760v41" stroke="#eee" />

      <CadText transform="translate(815 726) rotate(-45)" fontSize="52" textLength="212" lengthAdjust="spacingAndGlyphs" fill={WHITE} stroke={WHITE}>UC254x254x</CadText>
      <CadText transform="translate(856 765) rotate(-45)" fontSize="52" textLength="80" lengthAdjust="spacingAndGlyphs" fill={WHITE} stroke={WHITE}>bp1</CadText>

      <g fill="#fff" opacity="0.9">
        <rect x="1916" y="726" width="3" height="8" />
        <rect x="1916" y="757" width="3" height="8" />
        <rect x="1916" y="798" width="3" height="8" />
        <rect x="1916" y="826" width="3" height="8" />
      </g>
      <LogoMark transform="translate(1829 977) scale(0.108 0.115)" fill="#202020" cubeStroke="#202020" />
    </Drawing>
  )
}

export default function App() {
  return (
    <>
      <GlobalStyle />
      <Page>
        <TitleBar>
          <svg width="13" height="14" viewBox="0 0 13 14">
            <path d="M6.500 0 13 3.500v7L6.500 14 0 10.500v-7z" fill="#1565c8" />
            <path d="M6.500 2 11 4.500 6.500 7 2 4.500z" fill="#3f8fe8" />
          </svg>
          <TitleText>Drawing Editor - SDS2 2021i-BETA-1.1 Detailing - 2021 Online Training 2021 Online Training</TitleText>
          <WinControls>
            <WinControl><Minus size={13} strokeWidth={1} /></WinControl>
            <WinControl>
              <svg width="11" height="11" viewBox="0 0 11 11" fill="none" stroke="currentColor">
                <path d="M0.500 2.500h8v8h-8zM2.500 2.500v-2h8v8h-2" />
              </svg>
            </WinControl>
            <WinControl><X size={15} strokeWidth={1} /></WinControl>
          </WinControls>
        </TitleBar>

        <Ribbon>
          <MenuBar>
            <MenuItem>Drafting</MenuItem>
            <MenuItem>Drawings</MenuItem>
            <MenuItem>Display</MenuItem>
            <MenuItem>Import/Export</MenuItem>
            <MenuItem>Reports</MenuItem>
            <MenuItem $active>Dimensions</MenuItem>
            <MenuRight>
              <HelpBadge>?</HelpBadge>
              <Search size={13} strokeWidth={1.800} color="#333" />
              <SearchBox><X size={11} strokeWidth={2.200} /></SearchBox>
              <Select width={142} height={23}>Detailer</Select>
            </MenuRight>
          </MenuBar>
          <RibbonBody>
            <ToolGroup $width={248}>
              <ToolRow $left={4}>
                <PencilTool />
                <ToolStack $margin="0 11px 0 6px">
                  <EarthTool />
                  <EraserBadgeTool />
                </ToolStack>
                <EraserTool />
                <ToolGap $width={14} />
                <ExpandTool />
                <ToolGap $width={3} />
                <BoxTool />
              </ToolRow>
              <GroupLabel>Modify</GroupLabel>
            </ToolGroup>
            <RibbonDivider />
            <ToolGroup $width={185}>
              <ToolRow>
                <Scissors size={48} />
                <ToolStack $margin="0 7px 0 8px">
                  <Scissors size={20} />
                  <PagesTool />
                </ToolStack>
                <MonitorTool />
                <ToolGap $width={7} />
                <AreaTool />
              </ToolRow>
              <GroupLabel>Clipboard</GroupLabel>
            </ToolGroup>
          </RibbonBody>
          <RibbonFooter>
            <svg width="17" height="17" viewBox="0 0 17 17" fill="none" stroke="#b99bc4" strokeWidth="1.200">
              <path d="M1 1h7v15H1zM8 1h8v7H8zM8 8h8v7H8z" />
              <rect x="0.500" y="10" width="5" height="6" fill="#e6d6ea" />
            </svg>
            <ViewIcons>
              <ViewIcon kind="vsplit" />
              <ViewIcon kind="hsplit" />
              <ToolGap $width={3} />
              <ViewIcon kind="plain" />
              <ToolGap $width={3} />
              <ViewIcon kind="close" />
            </ViewIcons>
          </RibbonFooter>
        </Ribbon>

        <Main>
          <LeftStrip><CollapseArrow /></LeftStrip>
          <Canvas>
            <CadDrawing />
            <Toast>Cài đặt</Toast>
          </Canvas>
        </Main>

        <StatusBar>
          <StatusItem $width={96} $left={4}>Select Items</StatusItem>
          <PanBlock>
            <PanLabel>Pan</PanLabel>
            <PanRow>
              <PanCell $width={64} $line>Select</PanCell>
              <PanCell $width={68}>Menu</PanCell>
            </PanRow>
          </PanBlock>
          <DrawingCell>Drawing:<br />ANCHOR BOLT F</DrawingCell>
          <StatusField><Select width={202} height={24}>Default</Select></StatusField>
          <StatusItem $width={97} $left={8}>Selected: 1</StatusItem>
          <StatusItem $width={28}>
            <svg width="24" height="24" viewBox="0 0 24 24">
              <path d="M2 14 14 6l8 4-12 8z" fill="#ddd" stroke="#666" />
              <path d="M2 17l8 4 12-8" fill="none" stroke="#666" />
              <circle cx="15" cy="20" r="3.500" fill="#1d3f80" />
              <path d="M17 14 21 4l2 1-4 10z" fill="#e0a020" />
            </svg>
          </StatusItem>
          <StatusItem $width={34}>Layer:</StatusItem>
          <StatusField><Select width={127} height={24}>User Annotation</Select></StatusField>
        </StatusBar>

        <EditDialog />
      </Page>
    </>
  )
}
